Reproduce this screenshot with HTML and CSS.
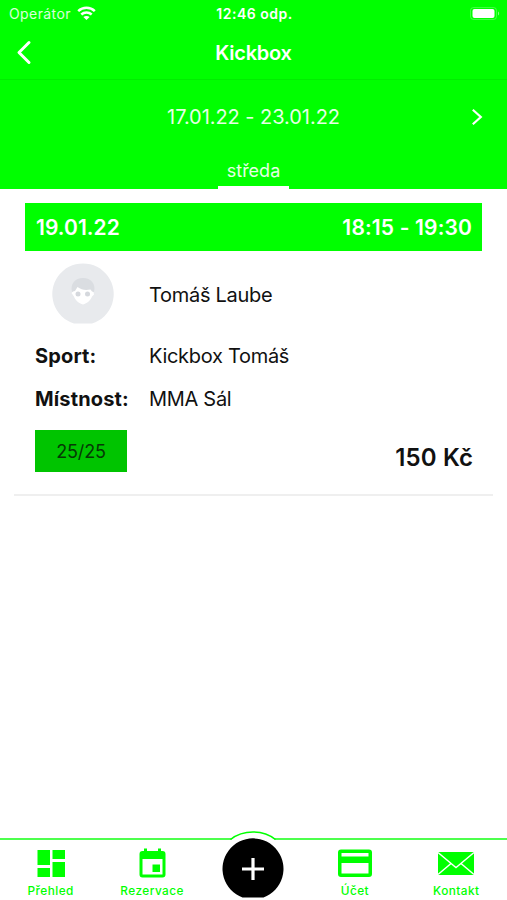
FILE: index.html
```html
<!DOCTYPE html>
<html lang="cs">
<head>
<meta charset="utf-8">
<title>Kickbox</title>
<link rel="stylesheet" href="styles.css">
</head>
<body>
<div class="app">
  <header class="header">
    <div class="status">
      <div class="carrier"><span class="operator">Operátor</span>
        <svg class="wifi" width="19" height="15" viewBox="0 0 19 15" fill="none" stroke="#fff" stroke-width="2.5"><path d="M1.200 5.200C5.800.7 13.200.7 17.800 5.200M4.300 8.500c3-2.800 7.400-2.800 10.400 0"/><path d="M9.500 14 6.400 11c1.700-1.500 4.500-1.500 6.200 0z" fill="#fff" stroke="none"/></svg>
      </div>
      <span class="clock">12:46 odp.</span>
      <svg class="battery" width="30" height="14" viewBox="0 0 30 14"><rect x=".5" y=".5" width="26" height="12" rx="3" fill="none" stroke="#fff" stroke-opacity=".25"/><rect x="2.500" y="2" width="22" height="9" rx="2" fill="#fff"/><path d="M28 4.500c1.500.5 1.500 3.500 0 4z" fill="#fff" fill-opacity=".5"/></svg>
    </div>
    <div class="navbar">
      <svg class="back" width="16" height="26" viewBox="0 0 16 26" fill="none" stroke="#fff" stroke-width="3" stroke-linecap="round" stroke-linejoin="round"><path d="M13 2.500 3 12.500l10 10"/></svg>
      <h1 class="title">Kickbox</h1>
    </div>
    <div class="week">
      <span class="range">17.01.22 - 23.01.22</span>
      <svg class="next" width="12" height="18" viewBox="0 0 12 18" fill="none" stroke="#fff" stroke-width="2.200"><path d="m1.800 1.800 8 7.200-8 7.200"/></svg>
    </div>
    <div class="days"><span class="day"><span class="day-name">středa</span></span></div>
  </header>

  <main class="content">
    <article class="lesson">
      <div class="slot"><span class="date">19.01.22</span><span class="time">18:15 - 19:30</span></div>
      <div class="row coach">
        <svg class="avatar" width="62" height="62" viewBox="0 0 62 62"><path d="M22 60.500A30.700 30.700 0 1 1 40 60.500z" fill="#e8eaed"/><path d="M20 29c-2-8 3-14 11-14s13 6 11 14z" fill="#dadde1"/><path d="m19.500 30 1.500-1.500 2-.5 2.500-4c4 3 8 3.500 13 2.500l1.500 2 1.500.5.500 2.500-2 2c-1 3.500-5 7-9 8-4-1-8-4.500-9-8z" fill="#fff"/><circle cx="26" cy="31" r="2.500" fill="#d5d8dd"/><circle cx="35.500" cy="31" r="2.500" fill="#d5d8dd"/></svg>
        <span class="value name">Tomáš Laube</span>
      </div>
      <div class="row sport"><span class="label l-sport">Sport:</span><span class="value v-sport">Kickbox Tomáš</span></div>
      <div class="row room"><span class="label l-room">Místnost:</span><span class="value v-room">MMA Sál</span></div>
      <div class="summary"><span class="capacity">25/25</span><span class="price">150 Kč</span></div>
    </article>
  </main>

  <nav class="tabs">
    <a class="tab"><svg class="icon" width="36" height="30" viewBox="0 0 36 30" fill="#0f0"><path d="M4.500 2H17V17H4.500zM19.500 2H32V11H19.500zM4.500 20H17V29H4.500zM19.500 14H32V29H19.500z"/></svg><span class="tab-name">Přehled</span></a>
    <a class="tab"><svg class="icon" width="36" height="30" viewBox="0 0 36 30" fill="#0f0"><path fill-rule="evenodd" d="M10 .5h3V3h11V.5h3V3h1.500a3 3 0 0 1 3 3v20.500a3 3 0 0 1-3 3H8.500a3 3 0 0 1-3-3V6a3 3 0 0 1 3-3H10zM8.500 11v15.500h20V11z"/><path d="M18.500 16.500H26V24h-7.500z"/></svg><span class="tab-name">Rezervace</span></a>
    <a class="tab add"><svg class="add-icon" width="70" height="69" viewBox="0 0 70 69"><path d="M13 10C25-1 45-1 57 10v5H13z" fill="#fff"/><path d="M12.500 9.500C25-.5 45-.5 57.500 9.500" fill="none" stroke="#0f0" stroke-width="1.500"/><path d="M24.500 67.500A30.500 30.500 0 1 1 45.500 67.500z" fill="#000"/><path d="M35 28v22M24 39h22" stroke="#fff" stroke-width="3.200"/></svg></a>
    <a class="tab"><svg class="icon" width="36" height="30" viewBox="0 0 36 30" fill="#0f0"><path fill-rule="evenodd" d="M4 1.500h28a3 3 0 0 1 3 3V26a3 3 0 0 1-3 3H4a3 3 0 0 1-3-3V4.500a3 3 0 0 1 3-3zM4.500 5v3.500h27V5zM4.500 15v10.500h27V15z"/></svg><span class="tab-name">Účet</span></a>
    <a class="tab"><svg class="icon" width="38" height="30" viewBox="0 0 38 30"><path d="M1 4h36v23H1z" fill="#0f0"/><path d="m1 4.500 15.500 13 2.500 2 2.500-2L37 4.500M1 26.500l13-11M37 26.500l-13-11" fill="none" stroke="#fff" stroke-width="1.500"/></svg><span class="tab-name">Kontakt</span></a>
  </nav>
</div>
</body>
</html>
```
FILE: styles.css
```css
* { box-sizing: border-box; }
body { margin: 0; background: #fff; color: #111; font-family: Inter, "Liberation Sans", sans-serif; }
.app { width: 507px; height: 900px; display: flex; flex-direction: column; overflow: hidden; }
svg { display: block; flex: none; }
span, h1 { white-space: nowrap; }
.header { height: 189px; background: #0f0; color: #fff; }
.status { height: 27px; display: grid; grid-template-columns: 1fr auto 1fr; align-items: center; padding: 0 7px 0 9px; font-size: 14px; line-height: 16px; }
.carrier { display: flex; align-items: center; gap: 6px; }
.operator { letter-spacing: .4px; opacity: .85; }
.clock { font-weight: 600; letter-spacing: .5px; }
.battery { justify-self: end; }
.navbar { height: 53px; display: grid; grid-template-columns: 1fr auto 1fr; align-items: center; padding: 0 16px; border-bottom: 1px solid #00ed00; }
.title { grid-column: 2; margin: 0; font-size: 20px; line-height: 26px; font-weight: 600; letter-spacing: -.25px; }
.week { height: 73px; display: grid; grid-template-columns: 1fr auto 1fr; align-items: center; padding: 0 24px; }
.range { grid-column: 2; font-size: 20px; letter-spacing: -.05px; opacity: .9; }
.next { justify-self: end; }
.days { height: 36px; display: flex; justify-content: center; }
.day { width: 71px; padding-top: 6px; border-bottom: 3px solid #fff; text-align: center; font-size: 18px; line-height: 24px; }
.day-name { opacity: .9; }
.content { flex: 1; padding: 14px 14px 0; }
.lesson { height: 293px; padding: 0 11px; border-bottom: 2px solid #efefef; }
.slot { height: 48px; background: #0f0; color: #fff; display: flex; justify-content: space-between; align-items: center; padding: 2px 10px 0 11px; font-size: 21px; font-weight: 600; line-height: 26px; }
.date { letter-spacing: .05px; }
.time { letter-spacing: .15px; }
.row { display: grid; grid-template-columns: 114px 1fr; align-items: center; padding-left: 10px; font-size: 20px; }
.coach { height: 86px; }
.avatar { margin-left: 17px; }
.value { letter-spacing: -.3px; }
.name { padding-top: 2px; }
.sport { height: 37px; }
.room { height: 49px; }
.label { font-weight: 700; letter-spacing: .15px; }
.summary { display: flex; justify-content: space-between; padding: 7px 9px 0 10px; }
.capacity { width: 92px; height: 42px; background: #00c400; color: #063806; font-size: 18px; line-height: 43px; letter-spacing: -.2px; text-align: center; }
.price { font-size: 24px; font-weight: 600; line-height: 30px; letter-spacing: .1px; margin-top: 13px; }
.tabs { height: 62px; border-top: 2px solid #4dff4d; display: grid; grid-template-columns: repeat(5, 1fr); color: #0f0; }
.tab { display: flex; flex-direction: column; align-items: center; padding-top: 8px; }
.tab-name { font-size: 11.800px; font-weight: 500; line-height: 14px; letter-spacing: .45px; margin-top: 6px; }
.add { padding: 0; }
.add-icon { margin-top: -10px; }
```
